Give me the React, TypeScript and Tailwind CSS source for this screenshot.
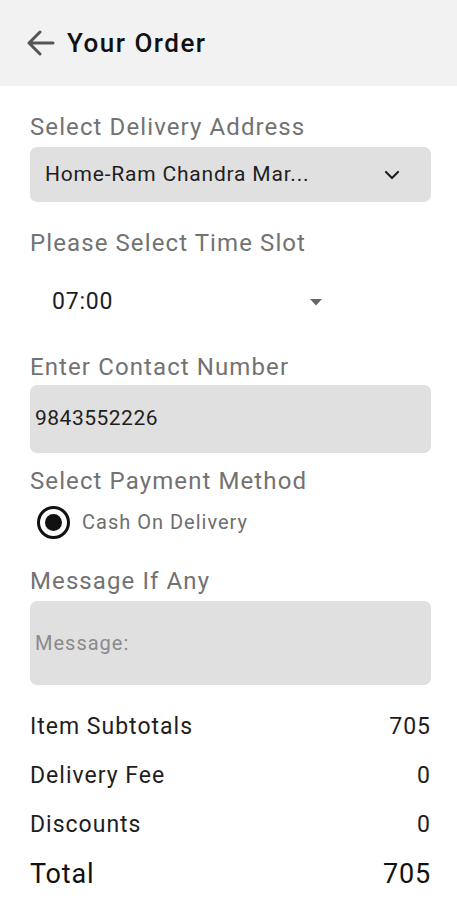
import React from "react";

export default function App() {
  const font = { fontFamily: "Roboto, 'Noto Sans', Arial, sans-serif" };
  return (
    <div className="w-[457px] h-[900px] bg-white overflow-hidden" style={font}>
      <div className="h-[86px] bg-[#f2f2f2] flex items-center pl-[26px]">
        <svg width="29" height="26" viewBox="0 0 29 26" fill="none">
          <path d="M27 13H3M14 2L3 13L14 24" stroke="#555" strokeWidth="3" strokeLinecap="round" strokeLinejoin="round" />
        </svg>
        <span className="ml-[12px] text-[26px] leading-[30px] font-medium tracking-[1.5px] text-[#111]">Your Order</span>
      </div>
      <div className="pl-[30px] pr-[26px] flex flex-col">
        <div className="mt-[27px] text-[24px] leading-[28px] tracking-[1.1px] text-[#727272]">Select Delivery Address</div>
        <div className="mt-[6px] h-[55px] rounded-[7px] bg-[#e0e0e0] flex items-center justify-between pl-[15px] pr-[31px]">
          <span className="text-[21px] tracking-[0.8px] text-[#1e1e1e]">Home-Ram Chandra Mar...</span>
          <svg width="16" height="10" viewBox="0 0 16 10" fill="none">
            <path d="M2 2L8 8L14 2" stroke="#222" strokeWidth="2.2" strokeLinecap="round" strokeLinejoin="round" />
          </svg>
        </div>
        <div className="mt-[27px] text-[24px] leading-[28px] tracking-[1.1px] text-[#727272]">Please Select Time Slot</div>
        <div className="mt-[20px] h-[50px] w-[300px] flex items-center justify-between pl-[22px] pr-[8px]">
          <span className="text-[23px] tracking-[0.8px] text-[#1e1e1e]">07:00</span>
          <svg width="12" height="7" viewBox="0 0 12 7">
            <path d="M0 0H12L6 6.5Z" fill="#666" />
          </svg>
        </div>
        <div className="mt-[26px] text-[24px] leading-[28px] tracking-[1.1px] text-[#727272]">Enter Contact Number</div>
        <div className="mt-[4px] h-[68px] rounded-[7px] bg-[#e0e0e0] flex items-center pl-[5px]">
          <span className="text-[21px] tracking-[0.5px] text-[#1e1e1e]">9843552226</span>
        </div>
        <div className="mt-[14px] text-[24px] leading-[28px] tracking-[1.1px] text-[#727272]">Select Payment Method</div>
        <div className="mt-[9px] h-[36px] flex items-center pl-[7px]">
          <div className="w-[33px] h-[33px] rounded-full border-[3px] border-[#111] flex items-center justify-center">
            <div className="w-[17px] h-[17px] rounded-full bg-[#111]" />
          </div>
          <span className="ml-[12px] text-[20px] tracking-[1px] text-[#6e6e6e]">Cash On Delivery</span>
        </div>
        <div className="mt-[27px] text-[24px] leading-[28px] tracking-[1.1px] text-[#727272]">Message If Any</div>
        <div className="mt-[6px] h-[84px] rounded-[7px] bg-[#e0e0e0] flex items-center pl-[5px]">
          <span className="text-[20px] tracking-[1px] text-[#8a8a8a]">Message:</span>
        </div>
        <div className="mt-[18px] flex flex-col">
          <div className="h-[49px] flex items-center justify-between text-[23px] tracking-[1px] text-[#1e1e1e]">
            <span>Item Subtotals</span>
            <span>705</span>
          </div>
          <div className="h-[49px] flex items-center justify-between text-[23px] tracking-[1px] text-[#1e1e1e]">
            <span>Delivery Fee</span>
            <span>0</span>
          </div>
          <div className="h-[49px] flex items-center justify-between text-[23px] tracking-[1px] text-[#1e1e1e]">
            <span>Discounts</span>
            <span>0</span>
          </div>
          <div className="h-[49px] flex items-center justify-between text-[27px] tracking-[0.8px] text-[#111]">
            <span>Total</span>
            <span>705</span>
          </div>
        </div>
      </div>
    </div>
  );
}
